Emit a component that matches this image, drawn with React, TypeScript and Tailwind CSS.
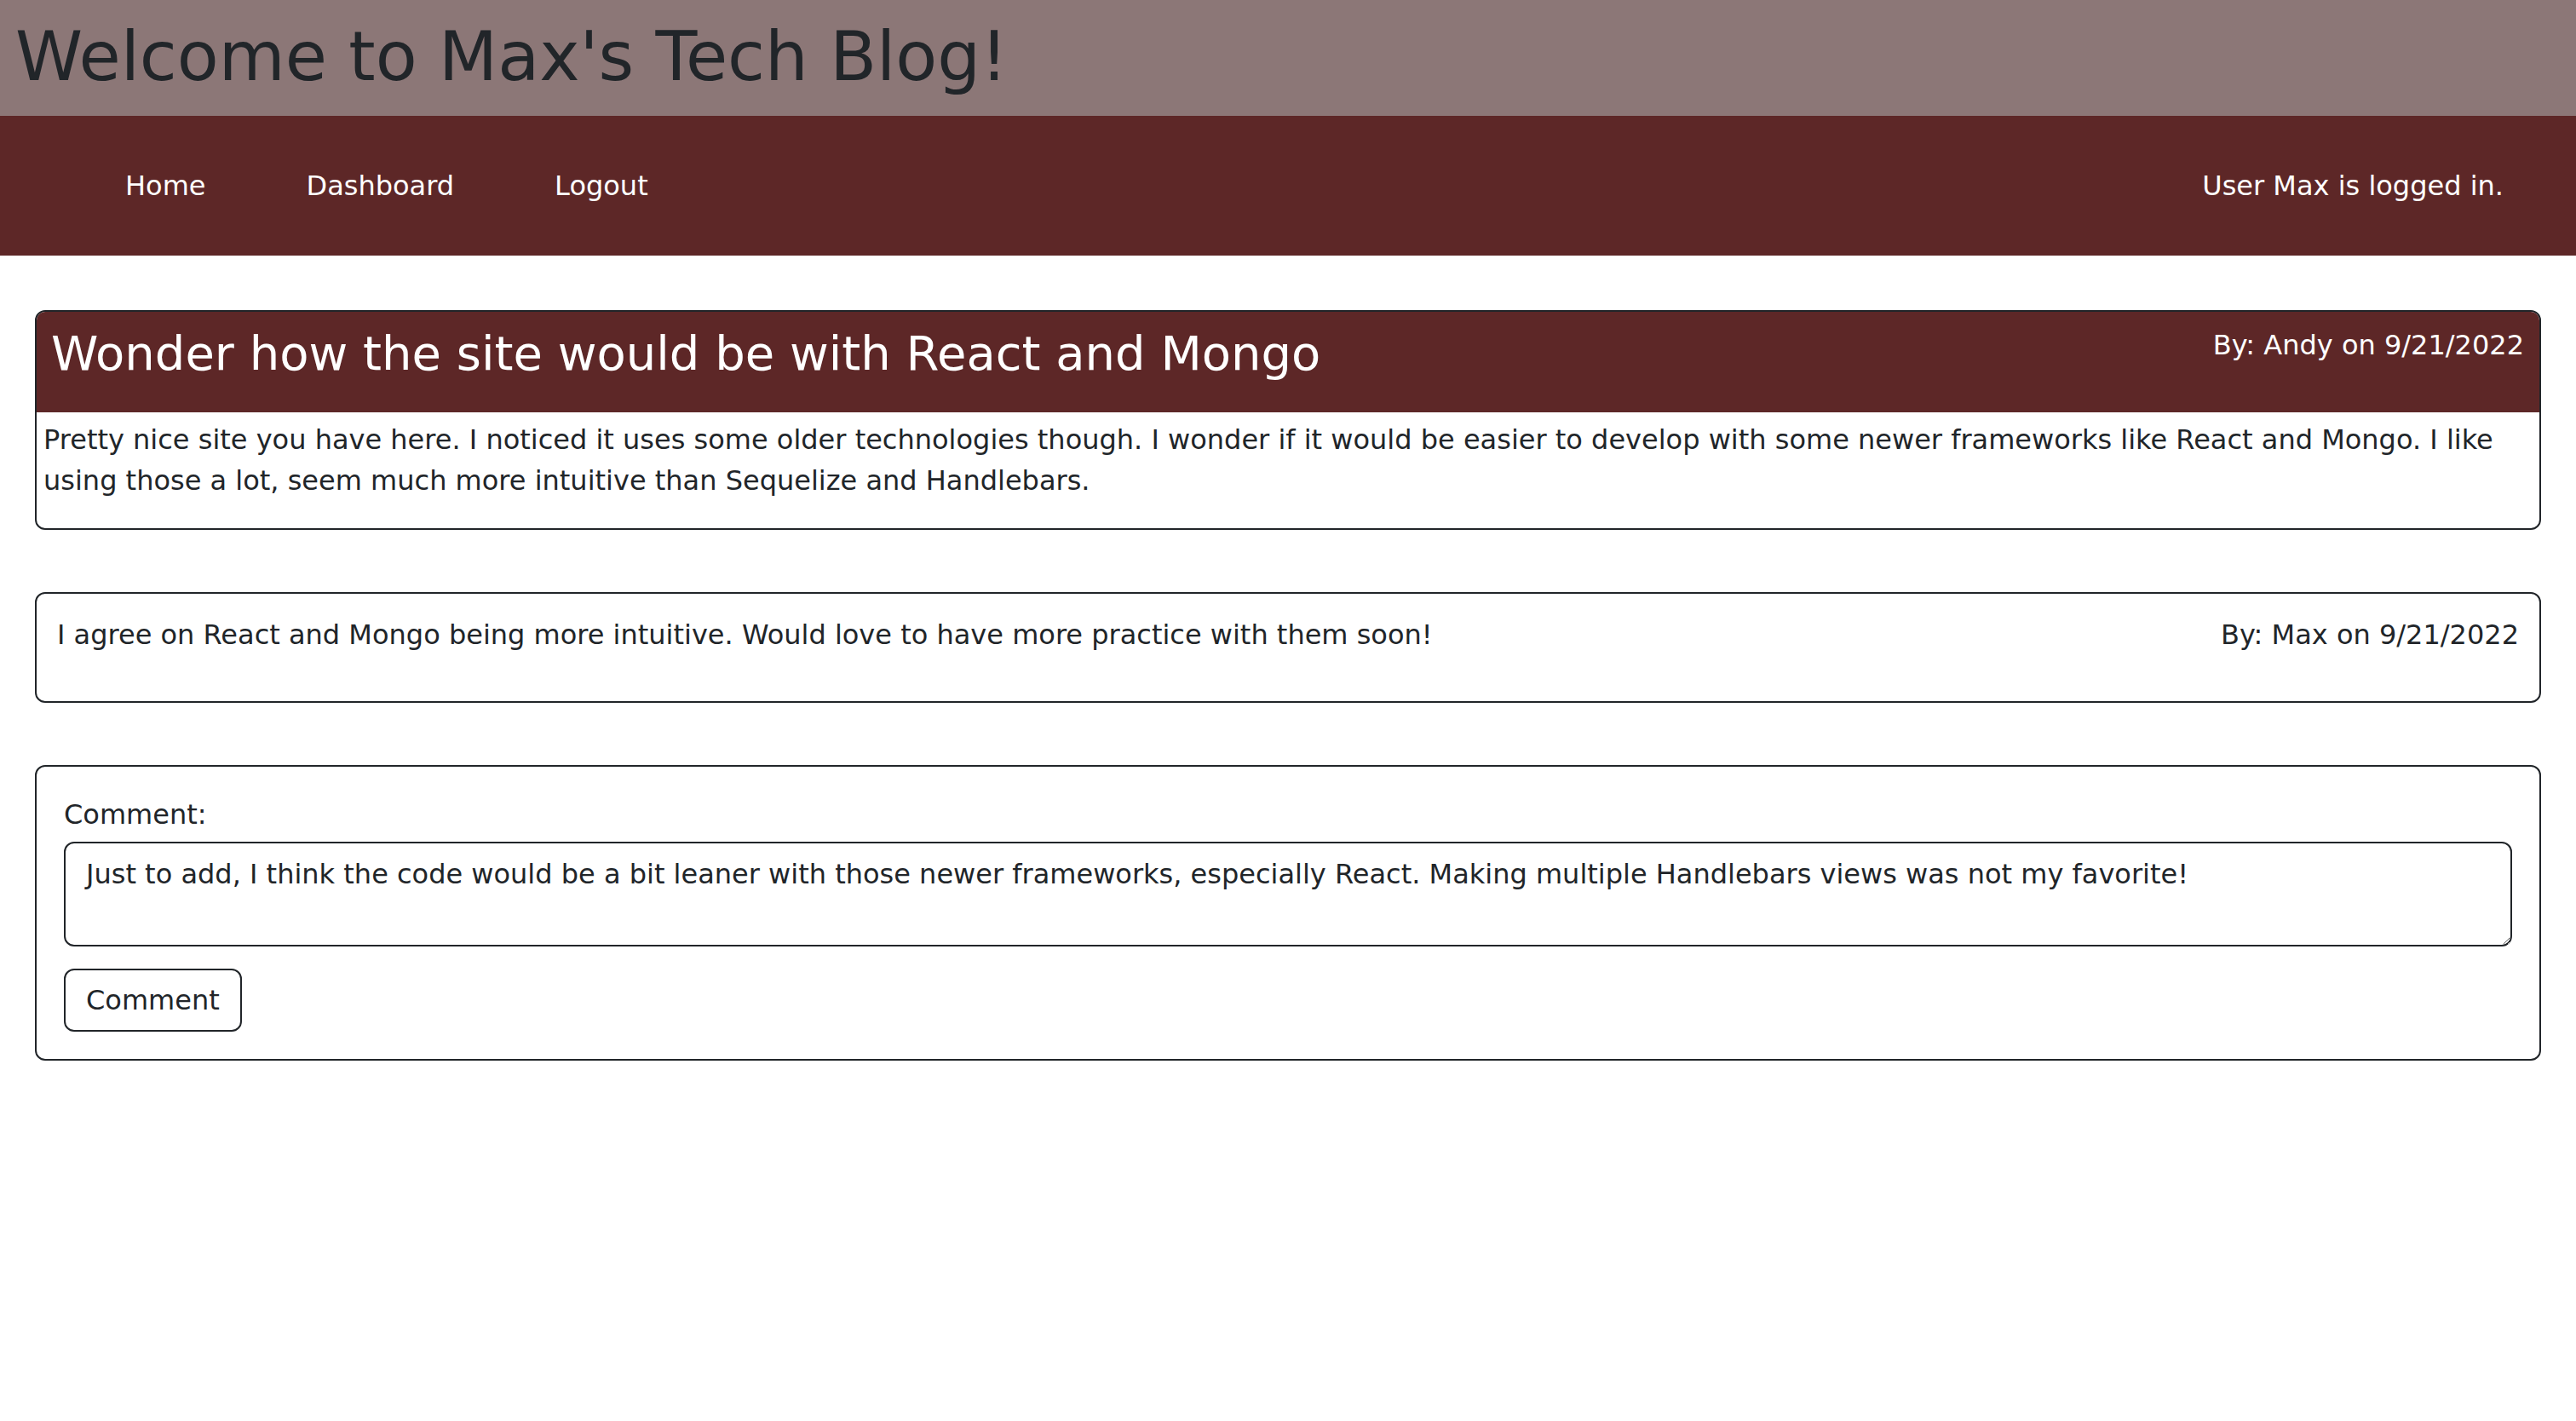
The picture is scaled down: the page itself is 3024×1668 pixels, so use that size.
const FONT = "font-['DejaVu_Sans','Liberation_Sans',sans-serif]";

function Header() {
  return (
    <header>
      <div className="bg-[#8c7777] pl-[18px] pt-[19px] pb-[21px]">
        <h1 className="text-[80px] leading-[96px] text-[#212529]">Welcome to Max's Tech Blog!</h1>
      </div>
      <nav className="bg-[#5d2727] h-[164px] flex items-center justify-between pl-[88px] pr-[85px] text-white text-[32px] leading-[48px]">
        <div className="flex">
          <a className="px-[59px]">Home</a>
          <a className="px-[59px]">Dashboard</a>
          <a className="px-[59px]">Logout</a>
        </div>
        <span>User Max is logged in.</span>
      </nav>
    </header>
  );
}

function PostCard() {
  return (
    <section className="border-2 border-[#212529] rounded-[12px] overflow-hidden">
      <div className="bg-[#5d2727] text-white flex items-start justify-between pl-[17px] pr-[18px] pt-[15px] pb-[36px]">
        <h3 className="text-[56px] leading-[67px]">Wonder how the site would be with React and Mongo</h3>
        <span className="text-[32px] leading-[48px] shrink-0">By: Andy on 9/21/2022</span>
      </div>
      <div className="px-[8px] pt-[8px] pb-[32px] text-[32px] leading-[48px] text-[#212529]">
        <p>
          Pretty nice site you have here. I noticed it uses some older technologies though. I wonder if it would be easier to develop with some newer frameworks like React and Mongo. I like using those a lot, seem much more intuitive than Sequelize and Handlebars.
        </p>
      </div>
    </section>
  );
}

function CommentCard() {
  return (
    <section className="border-2 border-[#212529] rounded-[12px] px-[24px] pt-[24px] pb-[54px] text-[32px] leading-[48px] text-[#212529] flex justify-between gap-8">
      <p>I agree on React and Mongo being more intuitive. Would love to have more practice with them soon!</p>
      <span className="shrink-0">By: Max on 9/21/2022</span>
    </section>
  );
}

function CommentForm() {
  return (
    <form className="border-2 border-[#212529] rounded-[12px] p-[32px] text-[32px] leading-[48px] text-[#212529]">
      <label className="block mb-[8px]">Comment:</label>
      <textarea
        rows={2}
        defaultValue="Just to add, I think the code would be a bit leaner with those newer frameworks, especially React. Making multiple Handlebars views was not my favorite!"
        className="block w-full h-[123px] border-2 border-[#212529] rounded-[12px] px-[24px] py-[12px] text-[32px] leading-[48px] outline-none"
      />
      <button type="button" className="mt-[26px] border-2 border-[#212529] rounded-[12px] px-[24px] py-[12px] text-[32px] leading-[46px]">
        Comment
      </button>
    </form>
  );
}

export default function App() {
  return (
    <div className={`${FONT} min-h-screen bg-white`}>
      <Header />
      <main className="px-[41px] pt-[64px] flex flex-col gap-[73px]">
        <PostCard />
        <CommentCard />
        <CommentForm />
      </main>
    </div>
  );
}
